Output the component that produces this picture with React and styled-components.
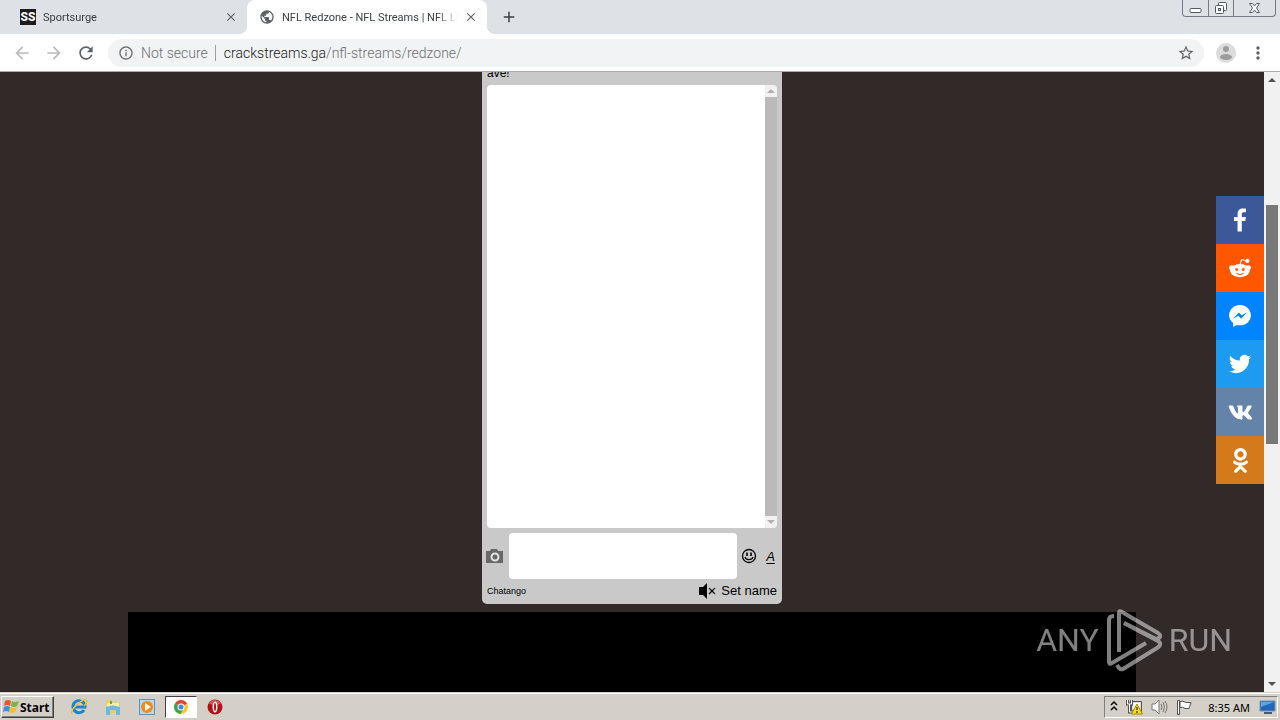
import React from "react";
import styled, { createGlobalStyle } from "styled-components";
import { FaVk, FaOdnoklassniki } from "react-icons/fa";
import {
  MdArrowBack,
  MdArrowForward,
  MdRefresh,
  MdInfoOutline,
  MdStarBorder,
  MdMoreVert,
  MdClose,
  MdAdd,
  MdPublic,
} from "react-icons/md";

const GlobalStyle = createGlobalStyle`
  * {
    box-sizing: border-box;
  }
  body {
    margin: 0;
    overflow: hidden;
  }
  button, input, textarea {
    margin: 0;
    padding: 0;
    border: 0;
    background: none;
    font: inherit;
    color: inherit;
  }
  a {
    color: inherit;
    text-decoration: none;
  }
  svg {
    display: block;
    flex: none;
  }
`;

const Desktop = styled.div`
  height: 100vh;
  display: flex;
  flex-direction: column;
  font-family: "Noto Sans", sans-serif;
  background: #322929;
`;

const TabStrip = styled.header`
  flex: none;
  display: flex;
  height: 34px;
  background: #dee1e6;
`;

const Tab = styled.div`
  position: relative;
  display: flex;
  align-items: center;
  width: ${(props) => (props.$active ? "240px" : "247px")};
  padding: 0 11px 0 ${(props) => (props.$active ? "12px" : "20px")};
  gap: 7px;
  background: ${(props) => (props.$active ? "white" : "#dee1e6")};
  border-radius: ${(props) => (props.$active ? "8px 8px 0 0" : "0")};
  color: #3c4043;
  font-family: Roboto, sans-serif;
  font-size: 11px;

  &::before,
  &::after {
    content: "";
    display: ${(props) => (props.$active ? "block" : "none")};
    position: absolute;
    bottom: 0;
    width: 8px;
    height: 8px;
  }
  &::before {
    right: 100%;
    background: radial-gradient(circle at 0 0, transparent 8px, white 8px);
  }
  &::after {
    left: 100%;
    background: radial-gradient(circle at 100% 0, transparent 8px, white 8px);
  }
`;

const TabTitle = styled.span`
  flex: 1;
  min-width: 0;
  overflow: hidden;
  white-space: nowrap;
  mask-image: linear-gradient(to right, black 88%, transparent);
`;

const Favicon = styled.span`
  width: 16px;
  height: 16px;
  background: #1c1c1e;
  color: white;
  font-size: 12px;
  line-height: 16px;
  font-weight: 800;
  text-align: center;
`;

const IconButton = styled.button`
  display: flex;
  align-items: center;
  justify-content: center;
  flex: none;
  width: ${(props) => props.$width || 32}px;
  color: ${(props) => props.$color || "#5f6368"};
`;

const WindowButtons = styled.div`
  display: grid;
  grid-template-columns: 25px 25px 42px;
  height: 17px;
  margin: 0 4px 0 auto;
  border: 1px solid #747b87;
  border-top: 0;
  border-radius: 0 0 4px 4px;

  button + button {
    border-left: 1px solid #747b87;
  }
  button {
    width: auto;
  }
`;

const Toolbar = styled.div`
  flex: none;
  display: flex;
  align-items: center;
  height: 38px;
  padding: 0 10px 0 6px;
  background: white;
  border-bottom: 1px solid #a9a9ab;
`;

const AddressBar = styled.div`
  flex: 1;
  display: flex;
  align-items: center;
  height: 28px;
  margin: 0 12px 0 6px;
  padding: 0 8px 0 10px;
  border-radius: 14px;
  background: #f1f3f4;
  color: #6b7075;
  font-family: Roboto, sans-serif;
  font-weight: 300;
  font-size: 14px;
  white-space: nowrap;
`;

const Security = styled.span`
  margin-left: 7px;
  padding-right: 7px;
  border-right: 1px solid #9a9da1;
  line-height: 16px;
`;

const Url = styled.a`
  flex: 1;
  margin-left: 8px;

  b {
    font-weight: 300;
    color: #202124;
  }
`;

const Avatar = styled.button`
  width: 20px;
  height: 20px;
  margin-right: 10px;
  border-radius: 50%;
  background: #dcdcdc;
`;

const Viewport = styled.main`
  flex: 1;
  min-height: 0;
  display: flex;
  position: relative;
`;

const Page = styled.div`
  flex: 1;
  display: flex;
  flex-direction: column;
  align-items: center;
  overflow: hidden;
`;

const Chat = styled.section`
  flex: none;
  display: flex;
  flex-direction: column;
  width: 300px;
  height: 532px;
  padding: 0 5px;
  background: #c9c9c9;
  border-radius: 0 0 5px 5px;
  font-family: "Liberation Sans", sans-serif;
  color: black;
`;

const Notice = styled.p`
  margin: 0;
  height: 13px;
  display: flex;
  align-items: flex-end;
  padding-bottom: 4px;
  overflow: hidden;
  font-size: 12px;
  line-height: 16px;
`;

const Messages = styled.div`
  flex: 1;
  display: flex;
  justify-content: flex-end;
  background: white;
  border-radius: 4px;
  overflow: hidden;
`;

const ChatScroll = styled.div`
  width: 12px;
  display: flex;
  flex-direction: column;
  justify-content: space-between;
  background: #bababa;
`;

const ScrollArrow = styled.button`
  display: flex;
  align-items: center;
  justify-content: center;
  width: 100%;
  height: ${(props) => props.$size}px;
  background: #f1f1f1;
  color: ${(props) => props.$color};
`;

const Composer = styled.div`
  display: flex;
  align-items: center;
  height: 46px;
  margin-top: 5px;
  margin-left: -2px;
`;

const MessageBox = styled.textarea`
  flex: 1;
  min-width: 0;
  height: 46px;
  margin: 0 3px 0 4px;
  background: white;
  border-radius: 4px;
  resize: none;
`;

const FontButton = styled(IconButton)`
  justify-content: flex-end;
  padding-right: 2px;
  font-size: 13px;
  font-style: italic;
  text-decoration: underline;
  text-underline-offset: 2px;
`;

const ChatFooter = styled.footer`
  display: flex;
  align-items: center;
  height: 25px;
  padding-bottom: 2px;
  gap: 5px;
`;

const Brand = styled.a`
  margin-right: auto;
  font-size: 9px;
`;

const SetName = styled.button`
  font-size: 13px;
`;

const Player = styled.div`
  flex: 1;
  align-self: stretch;
  margin: 8px 128px 0;
  background: black;
`;

const ShareBar = styled.nav`
  position: absolute;
  top: 124px;
  right: 16px;
`;

const ShareLink = styled.a`
  display: flex;
  align-items: center;
  justify-content: center;
  width: 48px;
  height: 48px;
  background: ${(props) => props.$color};
  color: white;
`;

const Scrollbar = styled.div`
  display: flex;
  flex-direction: column;
  width: 16px;
  background: #f1f1f1;
`;

const Track = styled.div`
  flex: 1;
  padding: 117px 2px 0;
`;

const Thumb = styled.div`
  height: 239px;
  background: #787878;
`;

const Watermark = styled.div`
  position: absolute;
  right: 48px;
  bottom: 20px;
  display: flex;
  align-items: center;
  gap: 7px;
  color: white;
  opacity: 0.5;
  font-family: Roboto, sans-serif;
  font-size: 32px;
  line-height: 64px;
`;

const Taskbar = styled.footer`
  flex: none;
  display: flex;
  align-items: center;
  height: 28px;
  padding: 1px 2px 0 1px;
  border-top: 1px solid #d4d0c8;
  box-shadow: inset 0 1px white;
  background: #d4d0c8;
  color: black;
`;

const StartButton = styled.button`
  display: flex;
  align-items: center;
  gap: 1px;
  width: 53px;
  height: 22px;
  margin-right: 9px;
  border: 1px solid;
  border-color: white #404040 #404040 white;
  box-shadow: inset -1px -1px #808080;
  font-size: 12px;
  font-weight: 700;
`;

const TaskButton = styled.button`
  display: flex;
  align-items: center;
  justify-content: center;
  width: 32px;
  height: 22px;
  margin-right: 2px;
  border: 1px solid;
  border-color: ${(props) => (props.$active ? "#404040 white white #404040" : "transparent")};
  background: ${(props) => (props.$active ? "white" : "none")};
`;

const Tray = styled.div`
  display: flex;
  align-items: center;
  gap: 8px;
  height: 22px;
  margin-left: auto;
  padding: 0 1px 0 5px;
  border: 1px solid;
  border-color: #808080 white white #808080;
`;

const Clock = styled.time`
  margin: 0 1px 0 7px;
  font-size: 11px;
  white-space: nowrap;
`;

const shares = [
  {
    name: "Facebook",
    color: "#3b5998",
    path: "M17.78 27.5V17.008h3.522l.527-4.09h-4.05v-2.61c0-1.182.33-1.99 2.023-1.99h2.166V4.66c-.375-.05-1.66-.16-3.155-.16-3.123 0-5.26 1.905-5.26 5.405v3.016h-3.53v4.09h3.53V27.5h4.223z",
  },
  {
    name: "Reddit",
    color: "#ff5700",
    path: "M28.543 15.774a2.953 2.953 0 0 0-2.951-2.949 2.882 2.882 0 0 0-1.9.713 14.075 14.075 0 0 0-6.85-2.044l1.38-4.349 3.768.884a2.452 2.452 0 1 0 .24-1.176l-4.274-1a.6.6 0 0 0-.709.4l-1.659 5.224a14.314 14.314 0 0 0-7.316 2.029 2.908 2.908 0 0 0-1.872-.681 2.942 2.942 0 0 0-1.618 5.4 5.109 5.109 0 0 0-.062.765c0 4.158 5.037 7.541 11.229 7.541s11.22-3.383 11.22-7.541a5.2 5.2 0 0 0-.053-.706 2.963 2.963 0 0 0 1.427-2.51zm-18.008 1.88a1.753 1.753 0 0 1 1.73-1.74 1.73 1.73 0 0 1 1.709 1.74 1.709 1.709 0 0 1-1.709 1.711 1.733 1.733 0 0 1-1.73-1.711zm9.565 4.968a5.573 5.573 0 0 1-4.081 1.272h-.032a5.576 5.576 0 0 1-4.087-1.272.6.6 0 0 1 .844-.854 4.5 4.5 0 0 0 3.238.927h.032a4.5 4.5 0 0 0 3.237-.927.6.6 0 1 1 .844.854zm-.331-3.256a1.726 1.726 0 1 1 1.709-1.712 1.717 1.717 0 0 1-1.712 1.712z",
    size: 28,
  },
  {
    name: "Messenger",
    color: "#0084ff",
    path: "M16 5C9.986 5 5.11 9.56 5.11 15.182c0 3.2 1.58 6.054 4.046 7.92V27l3.716-2.06c.99.276 2.04.425 3.128.425 6.014 0 10.89-4.56 10.89-10.183S22.013 5 16 5zm1.147 13.655L14.33 15.73l-5.423 3 5.946-6.31 2.816 2.925 5.42-3-5.946 6.31z",
  },
  {
    name: "Twitter",
    color: "#1d9bf0",
    path: "M28 8.557a9.913 9.913 0 0 1-2.828.775 4.93 4.93 0 0 0 2.166-2.725 9.738 9.738 0 0 1-3.13 1.194 4.92 4.92 0 0 0-3.593-1.55 4.924 4.924 0 0 0-4.794 6.049c-4.09-.21-7.72-2.17-10.15-5.15a4.942 4.942 0 0 0-.665 2.477c0 1.71.87 3.214 2.19 4.1a4.968 4.968 0 0 1-2.23-.616v.06c0 2.39 1.7 4.38 3.952 4.83-.414.115-.85.174-1.297.174-.318 0-.626-.03-.928-.086a4.935 4.935 0 0 0 4.6 3.42 9.893 9.893 0 0 1-6.114 2.107c-.398 0-.79-.023-1.175-.068a13.953 13.953 0 0 0 7.55 2.213c9.056 0 14.01-7.507 14.01-14.013 0-.213-.005-.426-.015-.637.96-.695 1.795-1.56 2.455-2.55z",
    size: 30,
  },
  { name: "VK", color: "#6383a8", icon: <FaVk size={25} /> },
  { name: "Odnoklassniki", color: "#d57a1a", icon: <FaOdnoklassniki size={25} /> },
];

function Arrow({ down, size = 8 }) {
  return (
    <svg width={size} height={size / 2} viewBox="0 0 8 4" fill="currentColor">
      <path d={down ? "M0 0h8L4 4z" : "M0 4h8L4 0z"} />
    </svg>
  );
}

function WindowControls() {
  return (
    <WindowButtons>
      <IconButton aria-label="Minimize">
        <svg width="13" height="16" viewBox="0 0 13 16">
          <rect x="1" y="8.5" width="11" height="4" rx="1" fill="white" stroke="#555b66" />
        </svg>
      </IconButton>
      <IconButton aria-label="Restore">
        <svg width="14" height="16" viewBox="0 0 14 16" fill="white" stroke="#555b66">
          <rect x="4.5" y="2.5" width="8" height="8" rx="1" />
          <rect x="1.5" y="5.5" width="8" height="8" rx="1" />
          <rect x="4.5" y="8.5" width="2" height="2" />
        </svg>
      </IconButton>
      <IconButton aria-label="Close">
        <svg width="13" height="16" viewBox="0 0 13 16" fill="white" stroke="#555b66">
          <path d="M1.5 3.5h3l2 2.5 2-2.5h3L8.5 8l3 4.5h-3l-2-2.5-2 2.5h-3l3-4.5z" />
        </svg>
      </IconButton>
    </WindowButtons>
  );
}

function Camera() {
  return (
    <svg width="18" height="16" viewBox="0 0 18 16">
      <path d="M0 3h4l1-2h6l1 2h5v12H0z" fill="currentColor" />
      <circle cx="9" cy="9" r="3.5" fill="none" stroke="#e4e4e4" strokeWidth="2" />
    </svg>
  );
}

function Smiley() {
  return (
    <svg width="16" height="16" viewBox="0 0 16 16" fill="none" stroke="black">
      <circle cx="8" cy="8" r="6.5" strokeWidth="1.3" />
      <path d="M6 4.5v3.5M10 4.5v3.5" strokeWidth="1.6" />
      <path d="M4 9c1 3.5 7 3.5 8 0" strokeWidth="1.2" />
    </svg>
  );
}

function Muted() {
  return (
    <svg width="17" height="16" viewBox="0 0 17 16">
      <path d="M0 4h4l4-4v16l-4-4H0z" />
      <path d="M10 5l6 6M16 5l-6 6" stroke="black" strokeWidth="1.2" />
    </svg>
  );
}

function PlayMark() {
  return (
    <svg width="56" height="64" viewBox="0 0 56 64" fill="none" stroke="white" strokeWidth="4" strokeLinejoin="round">
      <path d="M8 8Q3 8 3 12v42q0 3 3 1l34-20" />
      <path d="M13 44V5q0-3 3-1l36 21q4 3 1 5l-3 1L18 15" />
      <path d="M11 57l2 3q2 2 4 1l34-21q6-4 1-7L18 15" />
    </svg>
  );
}

function WindowsFlag() {
  return (
    <svg width="17" height="16" viewBox="0 0 17 16">
      <path d="M3 2q3-2 6 0L8 7Q5 5 2 7z" fill="#e8572a" />
      <path d="M10 2q3 2 7 0l-2 5q-3 2-6 0z" fill="#79b63a" />
      <path d="M2 8q3-2 6 0l-1 5q-3-2-6 0z" fill="#3c91d8" />
      <path d="M9 8q3 2 6 0l-2 5q-3 2-6 0z" fill="#f5bd27" />
    </svg>
  );
}

function Explorer() {
  return (
    <svg width="18" height="18" viewBox="0 0 18 18" fill="none">
      <path d="M14 12a6 6 0 1 1 1-3H5" stroke="#1b83d0" strokeWidth="3" />
      <path d="M2 16C-1 12 12 1 16 2c2 1 0 4-2 6" stroke="#eabf3c" strokeWidth="1.5" />
    </svg>
  );
}

function Folder() {
  return (
    <svg width="18" height="18" viewBox="0 0 18 18">
      <path d="M2 2h6l1 2h7v11H2z" fill="#e8cd68" />
      <path d="M3 5h12v7H3z" fill="#f9eeae" />
      <path d="M2 9q7-3 14 0v8h-4v-5H6v5H2z" fill="#71b8da" />
      <path d="M6 3h2v3H6z" fill="#65a852" />
    </svg>
  );
}

function MediaPlayer() {
  return (
    <svg width="16" height="16" viewBox="0 0 16 16">
      <rect x=".5" y=".5" width="15" height="15" fill="#b8d8ee" stroke="#5790c4" />
      <circle cx="8" cy="8" r="6" fill="#f28a16" />
      <path d="M6 4l6 4-6 4z" fill="white" />
    </svg>
  );
}

function Chrome() {
  return (
    <svg width="14" height="14" viewBox="0 0 14 14">
      <circle cx="7" cy="7" r="7" fill="#f7c928" />
      <path d="M7 7L1 3.5A7 7 0 0 1 13 3.5z" fill="#dc4638" />
      <path d="M7 7L1 3.5A7 7 0 0 0 6.5 14L10 8z" fill="#36a457" />
      <circle cx="7" cy="7" r="3.5" fill="white" />
      <circle cx="7" cy="7" r="2.5" fill="#4186ed" />
    </svg>
  );
}

function Opera() {
  return (
    <svg width="16" height="16" viewBox="0 0 16 16">
      <circle cx="8" cy="8" r="7.5" fill="#b30f17" />
      <path d="M2 4.5a7 7 0 0 1 12 0q-6 3-12 0z" fill="#d4585b" />
      <ellipse cx="8" cy="8" rx="2.5" ry="5.5" fill="white" />
      <ellipse cx="8" cy="8" rx="1" ry="4" fill="#b30f17" />
    </svg>
  );
}

function TrayIcons() {
  return (
    <>
      <svg width="8" height="14" viewBox="0 0 8 14" fill="none" stroke="black" strokeWidth="1.5">
        <path d="M1 5l3-3 3 3M1 10l3-3 3 3" />
      </svg>
      <svg width="17" height="16" viewBox="0 0 17 16">
        <path d="M5.5 2.500h10v10h-10z" fill="#d9d9d9" stroke="#555" />
        <path d="M7 4h7v6H7z" fill="white" />
        <path d="M1.5 1v4h4V1M3.500 5v8h4" fill="none" stroke="#555" strokeWidth="3" />
        <path d="M1.5 1v4h4V1M3.500 5v8h4" fill="none" stroke="white" />
        <path d="M11 5l5.500 10h-11z" fill="#ffdb22" stroke="#a58800" />
        <path d="M11 8v3M11 12v2" stroke="black" />
      </svg>
      <svg width="17" height="16" viewBox="0 0 17 16" fill="none" stroke="#777">
        <path d="M1 5h3l4-4v14l-4-4H1z" fill="white" />
        <path d="M10 5q2 3 0 6M12 3q3 5 0 10M14 2q4 6 0 12" />
      </svg>
      <svg width="17" height="16" viewBox="0 0 17 16" fill="white" stroke="#555">
        <path d="M1.5 1.500h2v14h-2zM4 2.500q3-1 6 1h5l-2 6H9q-2-2-5-1z" />
      </svg>
    </>
  );
}

export default function App() {
  return (
    <Desktop>
      <GlobalStyle />
      <TabStrip>
        <Tab>
          <Favicon>SS</Favicon>
          <TabTitle>Sportsurge</TabTitle>
          <IconButton $width={11} aria-label="Close tab">
            <MdClose size={14} />
          </IconButton>
        </Tab>
        <Tab $active>
          <MdPublic size={16} color="#5f6368" />
          <TabTitle>NFL Redzone - NFL Streams | NFL Live</TabTitle>
          <IconButton $width={11} aria-label="Close tab">
            <MdClose size={14} />
          </IconButton>
        </Tab>
        <IconButton $width={44} $color="#3c4043" aria-label="New tab">
          <MdAdd size={18} />
        </IconButton>
        <WindowControls />
      </TabStrip>
      <Toolbar>
        <IconButton $color="#b9bbbe" aria-label="Back">
          <MdArrowBack size={20} />
        </IconButton>
        <IconButton $color="#b9bbbe" aria-label="Forward">
          <MdArrowForward size={20} />
        </IconButton>
        <IconButton aria-label="Reload">
          <MdRefresh size={20} />
        </IconButton>
        <AddressBar>
          <MdInfoOutline size={16} />
          <Security>Not secure</Security>
          <Url href="#">
            <b>crackstreams.ga</b>/nfl-streams/redzone/
          </Url>
          <IconButton $width={20} aria-label="Bookmark">
            <MdStarBorder size={18} />
          </IconButton>
        </AddressBar>
        <Avatar aria-label="Profile">
          <svg width="20" height="20" viewBox="0 0 20 20" fill="#9d9d9d">
            <circle cx="10" cy="6" r="3" />
            <ellipse cx="10" cy="14" rx="6" ry="3" />
          </svg>
        </Avatar>
        <IconButton $width={24} aria-label="Menu">
          <MdMoreVert size={20} />
        </IconButton>
      </Toolbar>
      <Viewport>
        <Page>
          <Chat>
            <Notice>ave!</Notice>
            <Messages>
              <ChatScroll>
                <ScrollArrow $size={12} $color="#b0b0b0" aria-label="Scroll messages up">
                  <Arrow />
                </ScrollArrow>
                <ScrollArrow $size={12} $color="#b0b0b0" aria-label="Scroll messages down">
                  <Arrow down />
                </ScrollArrow>
              </ChatScroll>
            </Messages>
            <Composer>
              <IconButton $width={20} $color="#686868" aria-label="Send picture">
                <Camera />
              </IconButton>
              <MessageBox aria-label="Message" />
              <IconButton $width={18} aria-label="Smileys">
                <Smiley />
              </IconButton>
              <FontButton $width={19} $color="black" aria-label="Font style">
                A
              </FontButton>
            </Composer>
            <ChatFooter>
              <Brand href="#">Chatango</Brand>
              <IconButton $width={17} aria-label="Unmute">
                <Muted />
              </IconButton>
              <SetName>Set name</SetName>
            </ChatFooter>
          </Chat>
          <Player />
        </Page>
        <Scrollbar>
          <ScrollArrow $size={16} $color="#505050" aria-label="Scroll up">
            <Arrow />
          </ScrollArrow>
          <Track>
            <Thumb />
          </Track>
          <ScrollArrow $size={16} $color="#505050" aria-label="Scroll down">
            <Arrow down />
          </ScrollArrow>
        </Scrollbar>
        <ShareBar>
          {shares.map((share) => (
            <ShareLink key={share.name} href="#" $color={share.color} aria-label={share.name}>
              {share.icon || (
                <svg width={share.size || 32} height={share.size || 32} viewBox="0 0 32 32">
                  <path fill="white" fillRule="evenodd" d={share.path} />
                </svg>
              )}
            </ShareLink>
          ))}
        </ShareBar>
        <Watermark>
          <span>ANY</span>
          <PlayMark />
          <span>RUN</span>
        </Watermark>
      </Viewport>
      <Taskbar>
        <StartButton>
          <WindowsFlag />
          Start
        </StartButton>
        <TaskButton aria-label="Internet Explorer">
          <Explorer />
        </TaskButton>
        <TaskButton aria-label="Files">
          <Folder />
        </TaskButton>
        <TaskButton aria-label="Media Player">
          <MediaPlayer />
        </TaskButton>
        <TaskButton $active aria-label="Chrome">
          <Chrome />
        </TaskButton>
        <TaskButton aria-label="Opera">
          <Opera />
        </TaskButton>
        <Tray>
          <TrayIcons />
          <Clock>8:35 AM</Clock>
          <svg width="17" height="14" viewBox="0 0 17 14">
            <path d="M1 1h15v10H1z" fill="#2167b8" stroke="#7494b5" />
            <path d="M2 2h13L2 7z" fill="#5da5e0" />
            <path d="M5 13h8" stroke="#435a70" strokeWidth="2" />
          </svg>
        </Tray>
      </Taskbar>
    </Desktop>
  );
}
